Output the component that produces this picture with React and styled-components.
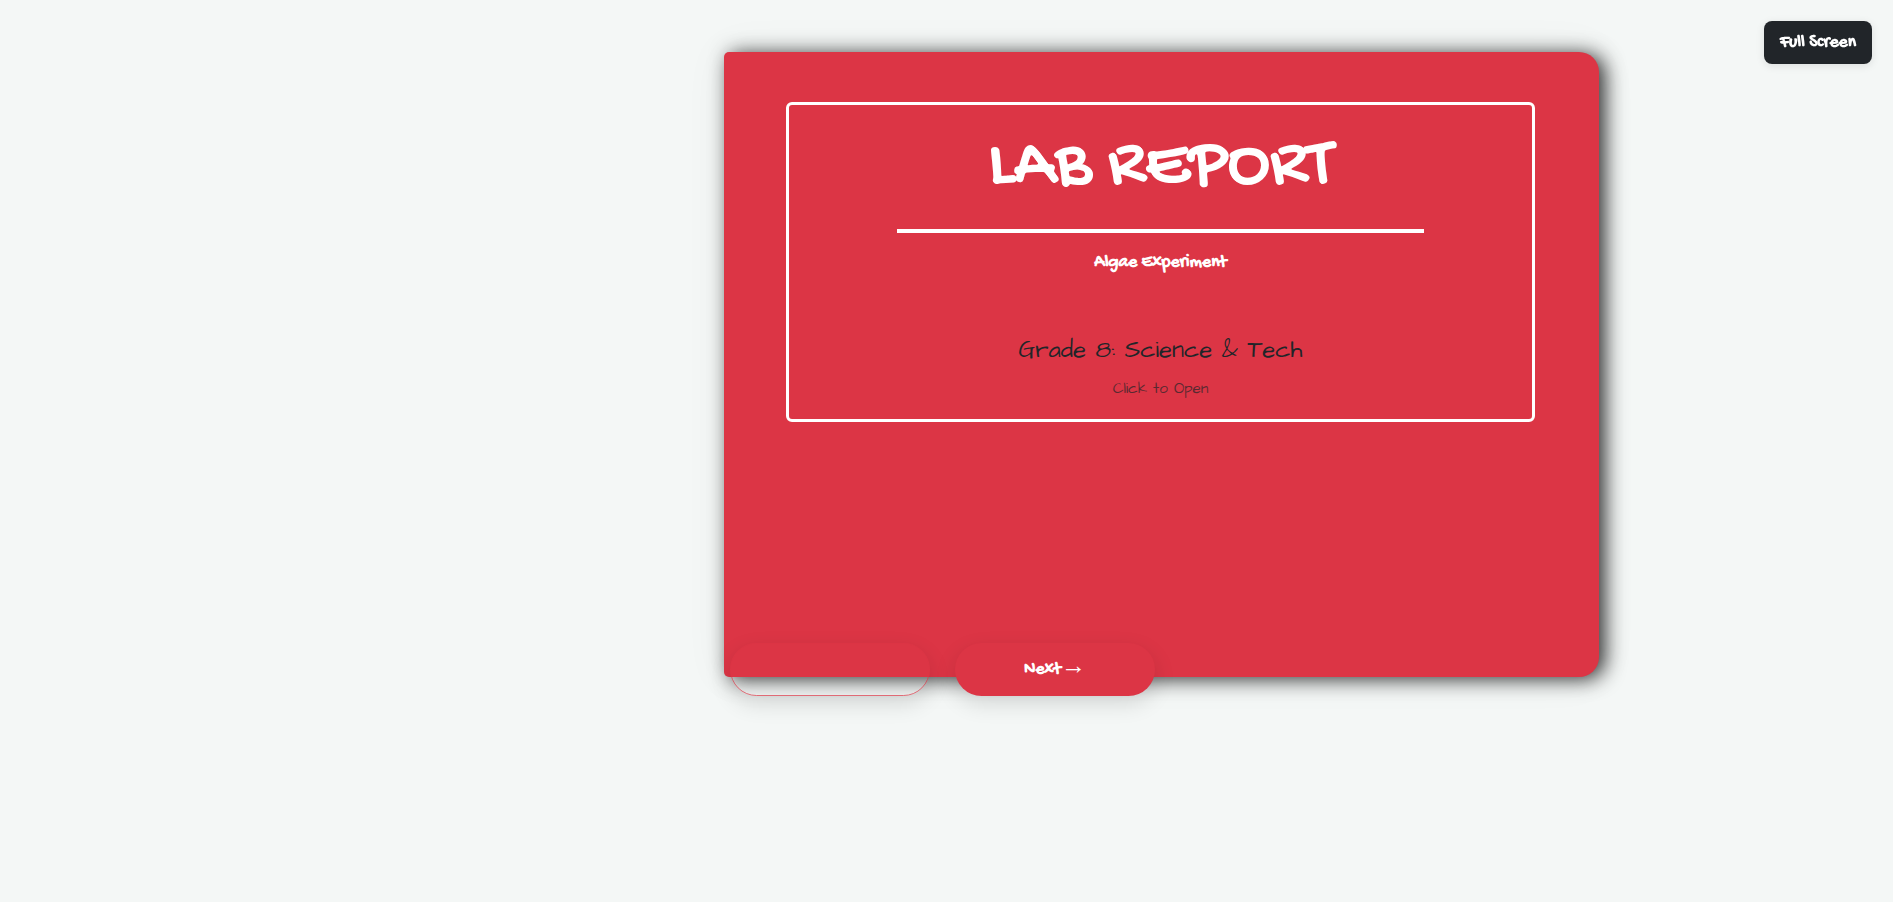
import React from "react"
import styled, { createGlobalStyle } from "styled-components"

const GlobalStyle = createGlobalStyle`
  html, body {
    margin: 0;
    padding: 0;
    min-height: 100%;
    background: #f4f7f6;
  }
  body {
    font-family: "Architects Daughter", cursive;
    color: #212529;
  }
`

const Page = styled.div`
  min-height: 902px;
  box-sizing: border-box;
  padding: 52px 0 0 724px;
  overflow: hidden;
`

const FullScreenButton = styled.button`
  position: fixed;
  top: 21px;
  right: 21px;
  width: 108px;
  height: 43px;
  padding: 0;
  border: 0;
  border-radius: 8px;
  background: #212529;
  box-shadow: 0 2px 8px rgba(0, 0, 0, 0.1);
  color: #fff;
  font-family: "Gochi Hand", cursive;
  font-size: 17.6px;
  font-weight: 700;
`

const Book = styled.div`
  position: relative;
  box-sizing: border-box;
  width: 875px;
  height: 625px;
  padding: 50px 64px 0 62px;
  border-radius: 5px 20px 20px 5px;
  background: #dc3545;
  box-shadow: 6px 2px 20px rgba(0, 0, 0, 0.8), 0 0 44px rgba(0, 0, 0, 0.06);
`

const Frame = styled.div`
  box-sizing: border-box;
  height: 320px;
  padding-top: 30px;
  border: 3px solid #fff;
  border-radius: 6px;
  display: flex;
  flex-direction: column;
  align-items: center;
`

const Title = styled.h1`
  margin: 0;
  color: #fff;
  font-family: "Gochi Hand", cursive;
  font-size: 70.4px;
  line-height: 66px;
  font-weight: 400;
  text-shadow: 1px 1px 0 #fff;
`

const Rule = styled.hr`
  width: 527px;
  height: 4px;
  margin: 28px 0 18px;
  border: 0;
  background: #fff;
`

const Subtitle = styled.h2`
  margin: 0;
  color: #fff;
  font-family: "Gochi Hand", cursive;
  font-size: 17.6px;
  line-height: 24px;
  font-weight: 700;
`

const Grade = styled.p`
  margin: 59px 0 0;
  font-size: 24px;
  line-height: 32px;
`

const Hint = styled.p`
  margin: 12px 0 0;
  font-size: 15.2px;
  line-height: 21px;
  opacity: 0.7;
`

const Controls = styled.div`
  position: absolute;
  left: 6px;
  bottom: -19px;
  display: flex;
  gap: 25px;
`

const PageButton = styled.button`
  display: flex;
  align-items: center;
  justify-content: center;
  width: 200px;
  height: 53px;
  padding: 0;
  border: ${({ $ghost }) => ($ghost ? "1px solid rgba(220, 53, 69, 0.7)" : "0")};
  border-radius: 27px;
  background: ${({ $ghost }) => ($ghost ? "transparent" : "#dc3545")};
  box-shadow: 0 8px 22px rgba(0, 0, 0, 0.12);
  color: #fff;
  font-family: "Gochi Hand", cursive;
  font-size: 17.6px;
  font-weight: 700;
`

const Arrow = styled.span`
  margin: 0 0 10px 0;
  font-family: "Liberation Sans", sans-serif;
  font-size: 25px;
  line-height: 22px;
  font-weight: 400;
`

export default function App() {
  return (
    <>
      <GlobalStyle />
      <Page>
        <FullScreenButton>Full Screen</FullScreenButton>
        <Book>
          <Frame>
            <Title>LAB REPORT</Title>
            <Rule />
            <Subtitle>Algae Experiment</Subtitle>
            <Grade>Grade 8: Science &amp; Tech</Grade>
            <Hint>Click to Open</Hint>
          </Frame>
          <Controls>
            <PageButton $ghost aria-label="Previous" />
            <PageButton>Next<Arrow>→</Arrow></PageButton>
          </Controls>
        </Book>
      </Page>
    </>
  )
}
